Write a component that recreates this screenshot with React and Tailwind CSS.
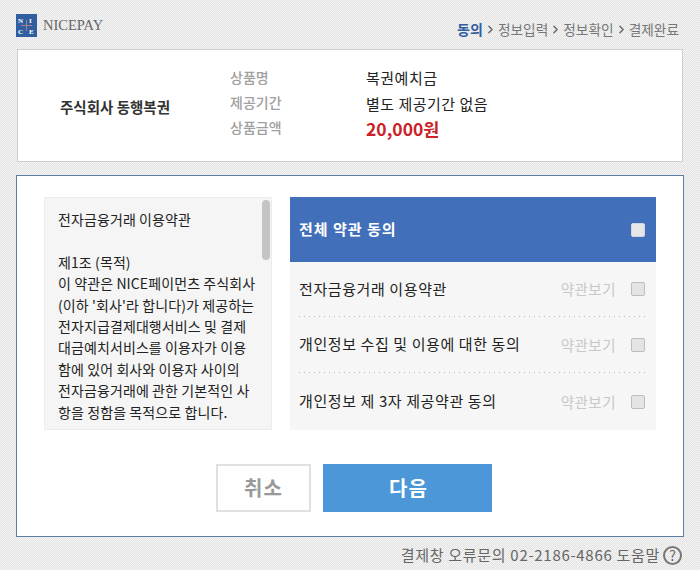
import { ChevronRight } from 'lucide-react';

const font = "font-['Noto_Sans_CJK_KR','Noto_Sans',sans-serif]";

const terms = [
    { label: '전자금융거래 이용약관', height: 'h-[54px]', line: true },
    { label: '개인정보 수집 및 이용에 대한 동의', height: 'h-[55px]', line: true },
    { label: '개인정보 제 3자 제공약관 동의', height: 'flex-1', line: false },
];

const Logo = () => (
    <svg width="21" height="23" viewBox="0 0 21 23">
        <rect width="21" height="23" fill="#2f5f9f" />
        <path d="M10.5 6v11M5 11.5h11" stroke="#c98a8a" strokeWidth="0.8" />
        <text x="2" y="9" fontSize="7" fontWeight="700" fill="#fff" fontFamily="Liberation Serif">N</text>
        <text x="13" y="9" fontSize="7" fontWeight="700" fill="#fff" fontFamily="Liberation Serif">I</text>
        <text x="2" y="20" fontSize="7" fontWeight="700" fill="#fff" fontFamily="Liberation Serif">C</text>
        <text x="13" y="20" fontSize="7" fontWeight="700" fill="#fff" fontFamily="Liberation Serif">E</text>
    </svg>
);

const Step = ({ label }) => (
    <>
        <ChevronRight className="w-[13px] h-[13px] -mx-[2px] mt-[1px] text-[#666]" strokeWidth={2.5} />
        <span>{label}</span>
    </>
);

const Check = ({ light }) => (
    <span className={`block w-[14px] h-[14px] rounded-[2px] border ${light ? 'bg-[#e6e6e6] border-[#cfd6e6]' : 'bg-[#e4e4e4] border-[#bdbdbd]'}`} />
);

export default function App() {
    return (
        <div className={`${font} w-[700px] h-[570px] overflow-hidden bg-[repeating-conic-gradient(#e4e4e4_0_25%,#f3f3f3_0_50%)] bg-[length:2px_2px]`}>
            {/* Header */}
            <div className="h-[49px] pl-[16px] pr-[21px] flex items-start justify-between">
                <div className="flex items-center gap-[6px] mt-[14px]">
                    <Logo />
                    <span className="font-['Liberation_Serif',serif] text-[14.5px] leading-[23px] text-[#666]">NICEPAY</span>
                </div>
                <div className="flex items-center gap-[3px] mt-[19px] text-[13.7px] leading-[20px] text-[#777]">
                    <span className="font-bold text-[14px] text-[#2f5f9f]">동의</span>
                    <Step label="정보입력" />
                    <Step label="정보확인" />
                    <Step label="결제완료" />
                </div>
            </div>

            {/* Product */}
            <div className="mx-[17px] h-[113px] bg-white border border-[#cfcfcf] flex">
                <div className="w-[212px] pl-[42px] pt-[47px] text-[14.5px] leading-[20px] font-bold text-[#333]">주식회사 동행복권</div>
                <div className="w-[136px] pt-[15px] text-[14px] leading-[25px] font-medium text-[#a0a0a0]">
                    <div>상품명</div>
                    <div>제공기간</div>
                    <div>상품금액</div>
                </div>
                <div className="pt-[15px] text-[15px] tracking-[0.5px] leading-[25.5px] text-[#222]">
                    <div>복권예치금</div>
                    <div>별도 제공기간 없음</div>
                    <div className="text-[17.5px] tracking-normal font-bold text-[#cc2127]">20,000원</div>
                </div>
            </div>

            {/* Agreement */}
            <div className="mx-[16px] mt-[13px] h-[362px] bg-white border border-[#5d7f9f] pt-[21px] px-[27px]">
                <div className="flex gap-[18px]">
                    <div className="relative w-[228px] h-[233px] overflow-hidden bg-[#f5f5f5] border border-[#ededed] pl-[13px] pt-[11px] text-[14px] tracking-[0.1px] leading-[21.4px] text-[#222] whitespace-nowrap">
                        <p>전자금융거래 이용약관</p>
                        <p>&nbsp;</p>
                        <p>제1조 (목적)</p>
                        <p>이 약관은 NICE페이먼츠 주식회사</p>
                        <p>(이하 '회사'라 합니다)가 제공하는</p>
                        <p>전자지급결제대행서비스 및 결제</p>
                        <p>대금예치서비스를 이용자가 이용</p>
                        <p>함에 있어 회사와 이용자 사이의</p>
                        <p>전자금융거래에 관한 기본적인 사</p>
                        <p>항을 정함을 목적으로 합니다.</p>
                        <div className="absolute top-[2px] right-[1px] w-[8px] h-[60px] rounded-full bg-[#c4c4c4]" />
                    </div>

                    <div className="w-[366px] h-[233px] bg-[#f6f6f6] flex flex-col">
                        <div className="h-[65px] bg-[#426fb9] flex items-center justify-between pl-[9px] pr-[11px] text-[15px] tracking-[1px] font-bold text-white">
                            <span>전체 약관 동의</span>
                            <Check light />
                        </div>
                        <div className="flex-1 flex flex-col px-[9px]">
                            {terms.map((t) => (
                                <div key={t.label} className={`${t.line ? '' : 'flex-1'} flex flex-col`}>
                                    <div className={`${t.height} flex items-center justify-between pr-[2px]`}>
                                        <span className="text-[15px] tracking-[0.6px] text-[#222]">{t.label}</span>
                                        <span className="flex items-center gap-[15px]">
                                            <span className="text-[14.5px] tracking-[0.5px] text-[#c8c8c8]">약관보기</span>
                                            <Check />
                                        </span>
                                    </div>
                                    {t.line && <div className="h-px bg-[linear-gradient(to_right,#b8b8b8_1px,transparent_1px)] bg-[length:5px_1px]" />}
                                </div>
                            ))}
                        </div>
                    </div>
                </div>

                <div className="mt-[34px] ml-[172px] flex gap-[12px]">
                    <button className="w-[95px] h-[48px] bg-white border-2 border-[#e0e0e0] text-[20px] tracking-[1px] font-bold text-[#999]">취소</button>
                    <button className="w-[169px] h-[48px] pl-[2px] bg-[#4b97d8] text-[20px] tracking-[1px] font-bold text-white">다음</button>
                </div>
            </div>

            {/* Footer */}
            <div className="mr-[18px] mt-[7px] flex items-center justify-end gap-[3px] text-[15px] tracking-[0.7px] leading-[22px] text-[#666]">
                <span>결제창 오류문의 02-2186-4866 도움말</span>
                <span className="w-[19px] h-[19px] rounded-full border-2 border-[#777] flex items-center justify-center text-[14px] tracking-normal leading-none">?</span>
            </div>
        </div>
    );
}
